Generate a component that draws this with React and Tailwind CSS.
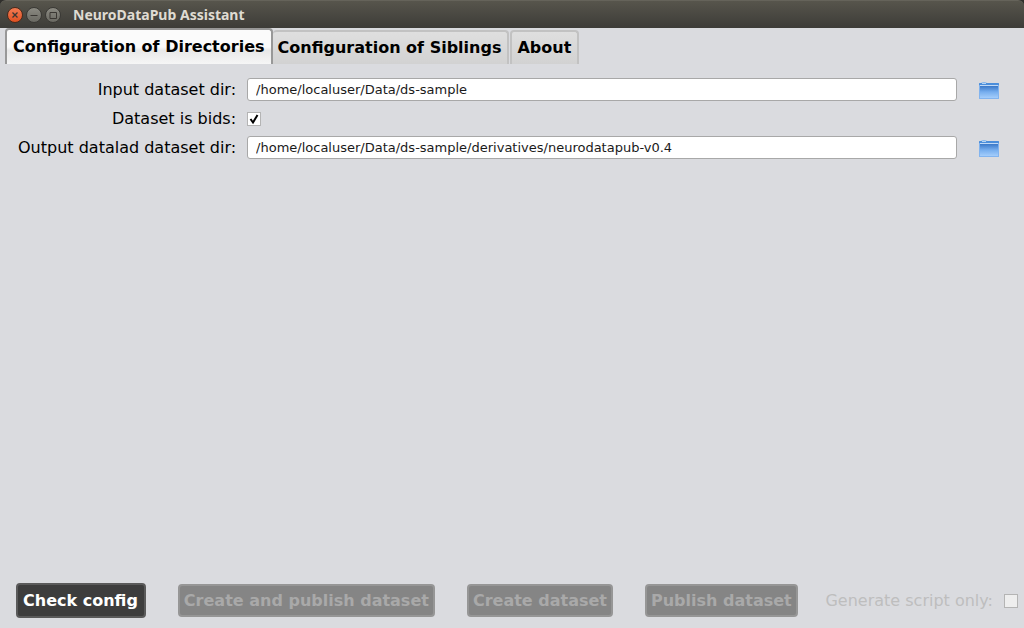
import { useState } from "react";

function WindowButton({ label, close, children }) {
  return (
    <button
      aria-label={label}
      className={
        "flex size-4 items-center justify-center rounded-full border " +
        (close
          ? "border-[#4a2a1c] bg-linear-to-b from-[#f27b52] to-[#e0501f]"
          : "border-[#3a3935] bg-linear-to-b from-[#8b8a82] to-[#6a6962]")
      }
    >
      <svg viewBox="0 0 14 14" className="size-3.5 shrink-0" fill="none" stroke="#3a3733" strokeWidth="1">
        {children}
      </svg>
    </button>
  );
}

function TitleBar() {
  return (
    <header className="flex h-7 items-center rounded-t-md border-t border-[#65635a] bg-linear-to-b from-[#57554c] to-[#3d3c38] pl-[7px]">
      <div className="flex gap-[3px]">
        <WindowButton label="Close" close>
          <path d="M4.500 4.500l5 5M9.500 4.500l-5 5" strokeWidth="1.300" />
        </WindowButton>
        <WindowButton label="Minimize">
          <path d="M3.500 7.500h7" />
        </WindowButton>
        <WindowButton label="Maximize">
          <path d="M4 4.500h6.500v6h-6.500z" />
        </WindowButton>
      </div>
      <h1 className="ml-3 font-['Noto_Sans','Open_Sans',sans-serif] text-sm font-bold text-[#dfdbd2]">
        NeuroDataPub Assistant
      </h1>
    </header>
  );
}

const tabs = ["Configuration of Directories", "Configuration of Siblings", "About"];

function Tabs({ active, onSelect }) {
  return (
    <div role="tablist" className="flex h-9 items-end pl-[5px] font-bold text-black">
      {tabs.map((name, i) => (
        <button
          key={name}
          role="tab"
          aria-selected={i === active}
          onClick={() => onSelect(i)}
          className={
            i === active
              ? "h-9 rounded-t border-2 border-b-0 border-[#989898] bg-linear-to-b from-[#fbfbfb] from-50% via-[#e8e8e8] via-60% to-[#f6f6f6] px-1.5"
              : "mr-px h-[34px] rounded-t border-2 border-b-0 border-[#c2c2c2] bg-linear-to-b from-[#dfdfdf] to-[#d2d2d2] pr-1.5 pl-[5px] nth-2:border-l-0"
          }
        >
          {name}
        </button>
      ))}
    </div>
  );
}

function FolderIcon() {
  return (
    <svg viewBox="0 0 20 17" className="h-[17px] w-5" aria-hidden="true">
      <defs>
        <linearGradient id="folder-front" x1="0" y1="0" x2="0" y2="1">
          <stop offset="0" stopColor="#3a78c8" />
          <stop offset="0.5" stopColor="#77aeee" />
          <stop offset="1" stopColor="#a4cdfb" />
        </linearGradient>
      </defs>
      <path d="M2.500 2.500V1.500q0-1 1-1h3q1 0 1 1V2.500z" fill="#b4d3f3" stroke="#8bb9ec" />
      <rect x="0" y="1" width="20" height="3" rx="0.500" fill="#4b8edb" />
      <path d="M3 1h4v1h-4z" fill="#b4d3f3" />
      <rect x="0" y="3" width="20" height="14" rx="0.500" fill="#82b4ef" />
      <rect x="1" y="3" width="18" height="1" fill="#c0d9f5" />
      <rect x="1" y="4" width="18" height="12" fill="url(#folder-front)" />
    </svg>
  );
}

function CheckBox({ id, ...props }) {
  return (
    <span className="grid size-3.5 shrink-0">
      <input
        id={id}
        type="checkbox"
        className="peer col-start-1 row-start-1 size-3.5 appearance-none border border-[#b4b4b4] bg-white disabled:bg-[#eeeeee]"
        {...props}
      />
      <svg
        viewBox="0 0 14 14"
        className="pointer-events-none invisible col-start-1 row-start-1 size-3.5 peer-checked:visible"
        fill="none"
        stroke="#000"
        strokeWidth="2"
      >
        <path d="M3.500 7L6 10.500L10.500 3" />
      </svg>
    </span>
  );
}

function DirectoryRow({ id, label, value }) {
  return (
    <>
      <label htmlFor={id} className="text-right">{label}</label>
      <input
        id={id}
        type="text"
        defaultValue={value}
        className="mr-[22px] ml-[11px] h-[23px] min-w-0 rounded-[3px] border border-[#a8a8a8] bg-white px-2 text-[13px] text-[#1a1a1a]"
      />
      <button aria-label={"Browse " + label} className="flex justify-center pt-0.5">
        <FolderIcon />
      </button>
    </>
  );
}

function ActionButton({ children, disabled }) {
  return (
    <button
      disabled={disabled}
      className="h-[35px] shrink-0 rounded border-2 border-[#5a5a5a] bg-[#3d3d3d] pr-1.5 pl-[5px] font-bold whitespace-nowrap text-white disabled:h-[33px] disabled:border-[#969696] disabled:bg-[#858585] disabled:px-1 disabled:text-[#a9a9a9]"
    >
      {children}
    </button>
  );
}

export default function App() {
  const [active, setActive] = useState(0);
  return (
    <div className="flex min-h-screen flex-col bg-[#dadbdf] font-['DejaVu_Sans',sans-serif] text-base leading-6 text-black">
      <div className="bg-[#302f2c]">
        <TitleBar />
      </div>
      <Tabs active={active} onSelect={setActive} />
      <main className="grid auto-rows-[23px] grid-cols-[auto_1fr_20px] content-start items-center gap-y-1.5 pt-3.5 pr-[25px] pl-[18px]">
        <DirectoryRow id="input-dir" label="Input dataset dir:" value="/home/localuser/Data/ds-sample" />
        <label htmlFor="is-bids" className="text-right">Dataset is bids:</label>
        <div className="col-span-2 ml-[11px]">
          <CheckBox id="is-bids" defaultChecked />
        </div>
        <DirectoryRow
          id="output-dir"
          label="Output datalad dataset dir:"
          value="/home/localuser/Data/ds-sample/derivatives/neurodatapub-v0.4"
        />
      </main>
      <footer className="mt-auto flex items-center gap-8 pr-1.5 pb-2.5 pl-4">
        <ActionButton>Check config</ActionButton>
        <ActionButton disabled>Create and publish dataset</ActionButton>
        <ActionButton disabled>Create dataset</ActionButton>
        <ActionButton disabled>Publish dataset</ActionButton>
        <div className="-ml-2 flex flex-1 items-center justify-end gap-[11px] whitespace-nowrap text-[#bebebe]">
          <label htmlFor="script-only">Generate script only:</label>
          <CheckBox id="script-only" disabled />
        </div>
      </footer>
    </div>
  );
}
